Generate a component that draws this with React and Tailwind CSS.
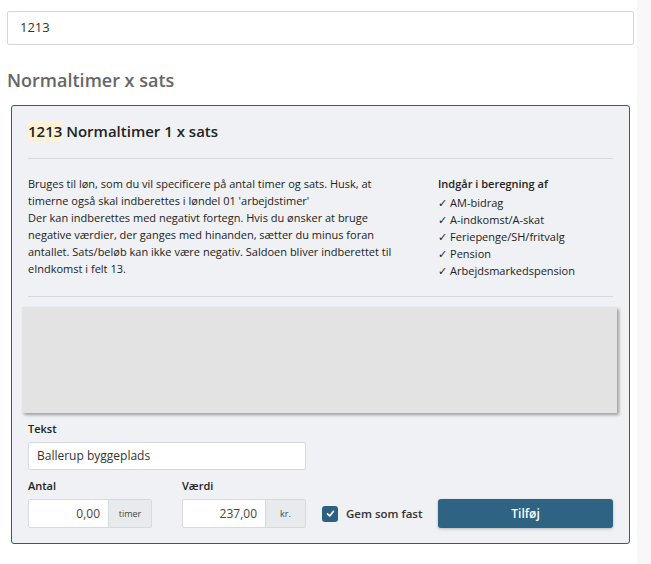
export default function App() {
  const items = [
    "AM-bidrag",
    "A-indkomst/A-skat",
    "Feriepenge/SH/fritvalg",
    "Pension",
    "Arbejdsmarkedspension",
  ];

  return (
    <div
      className="flex w-[651px] h-[564px] bg-white text-[#222]"
      style={{ fontFamily: '"Open Sans", "Noto Sans", sans-serif' }}
    >
      <div className="w-[637px] pl-[7px] pt-[11px]">
        {/* Search */}
        <div className="w-[627px] h-[34px] border border-[#d3d7dc] rounded-[2px] bg-white flex items-center px-3 text-[13px] text-[#333]">
          1213
        </div>

        <h2 className="mt-[23px] text-[18px] font-semibold text-[#666] leading-[24px]">
          Normaltimer x sats
        </h2>

        {/* Card */}
        <div className="mt-[13px] ml-[4px] w-[619px] h-[439px] border border-[#2b5d7e] rounded-[3px] bg-[#eff1f5] px-4">
          {/* Title */}
          <div className="pt-[14px] pb-[16px] border-b border-[#d5d9df]">
            <h3 className="text-[15px] font-semibold leading-[22px] text-[#222]">
              <span className="bg-[#fdf1d6]">1213</span> Normaltimer 1 x sats
            </h3>
          </div>

          {/* Description */}
          <div className="flex pt-[16px] pb-[17px] border-b border-[#d5d9df] text-[11px] leading-[17px] text-[#222]">
            <p className="w-[372px]">
              Bruges til løn, som du vil specificere på antal timer og sats. Husk, at
              timerne også skal indberettes i løndel 01 'arbejdstimer'
              <br />
              Der kan indberettes med negativt fortegn. Hvis du ønsker at bruge
              negative værdier, der ganges med hinanden, sætter du minus foran
              antallet. Sats/beløb kan ikke være negativ. Saldoen bliver indberettet til
              eIndkomst i felt 13.
            </p>
            <div className="ml-[38px]">
              <div className="font-semibold mb-[2px] h-[17px]">Indgår i beregning af</div>
              {items.map((it) => (
                <div key={it} className="h-[17px] whitespace-nowrap">
                  <span style={{ fontFamily: '"DejaVu Sans", sans-serif' }}>✓</span> {it}
                </div>
              ))}
            </div>
          </div>

          {/* Gray box */}
          <div className="mt-[10px] -ml-[6px] w-[595px] h-[106px] bg-[#e3e3e3] shadow-[2px_2px_3px_rgba(0,0,0,0.35)]" />

          {/* Form */}
          <div className="mt-[8px]">
            <label className="block text-[11px] font-semibold leading-[16px]">Tekst</label>
            <div className="mt-[5px] w-[278px] h-[28px] bg-white border border-[#d6d9dd] rounded-[2px] flex items-center px-[8px] text-[12px] text-[#333]">
              Ballerup byggeplads
            </div>

            <div className="flex mt-[8px] items-end">
              <div className="w-[154px]">
                <label className="block text-[11px] font-semibold leading-[16px]">Antal</label>
                <div className="mt-[5px] flex w-[124px] h-[29px] border border-[#d6d9dd] rounded-[2px] overflow-hidden">
                  <div className="flex-1 bg-white flex items-center justify-end pr-[8px] text-[12px] text-[#444]">
                    0,00
                  </div>
                  <div className="w-[43px] bg-[#e8ebee] border-l border-[#d6d9dd] flex items-center justify-center text-[9px] text-[#444]">
                    timer
                  </div>
                </div>
              </div>
              <div className="w-[140px]">
                <label className="block text-[11px] font-semibold leading-[16px]">Værdi</label>
                <div className="mt-[5px] flex w-[124px] h-[29px] border border-[#d6d9dd] rounded-[2px] overflow-hidden">
                  <div className="flex-1 bg-white flex items-center justify-end pr-[8px] text-[12px] text-[#444]">
                    237,00
                  </div>
                  <div className="w-[40px] bg-[#e8ebee] border-l border-[#d6d9dd] flex items-center justify-center text-[9px] text-[#444]">
                    kr.
                  </div>
                </div>
              </div>
              <div className="h-[29px] flex items-center w-[116px]">
                <div className="w-[16px] h-[16px] rounded-[3px] bg-[#2d5f80] flex items-center justify-center">
                  <svg width="9" height="9" viewBox="0 0 12 12" fill="none">
                    <path d="M2 6.5 L5 9.2 L10 3" stroke="white" strokeWidth="2.2" strokeLinecap="round" strokeLinejoin="round" />
                  </svg>
                </div>
                <span className="ml-[8px] text-[11.5px] font-semibold text-[#333]">Gem som fast</span>
              </div>
              <button className="w-[175px] h-[29px] bg-[#2e6384] rounded-[3px] text-white text-[12px] font-semibold shadow-[0_1px_3px_rgba(0,0,0,0.25)]">
                Tilføj
              </button>
            </div>
          </div>
        </div>
      </div>
      <div className="flex-1 bg-[#f8f8f8]" />
    </div>
  );
}
